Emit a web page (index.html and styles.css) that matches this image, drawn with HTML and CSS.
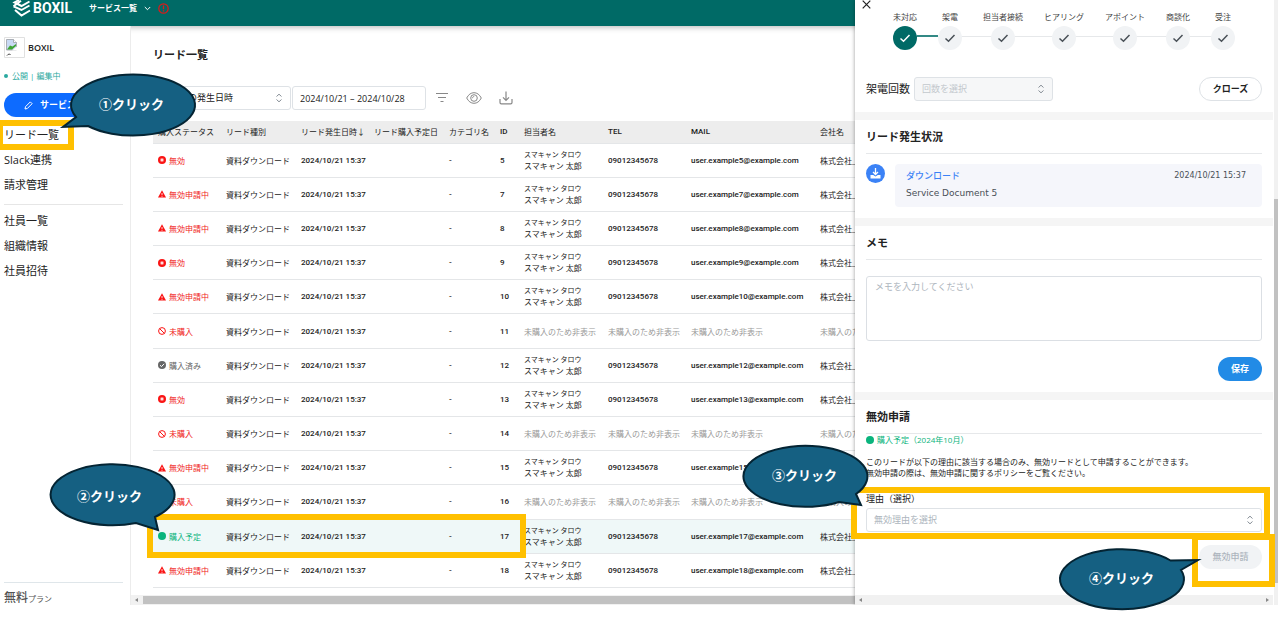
FILE: index.html
```
<!DOCTYPE html>
<html lang="ja">
<head>
<meta charset="utf-8">
<title>リード一覧 | BOXIL</title>
<link rel="stylesheet" href="styles.css">
</head>
<body>
<svg class="sprite" aria-hidden="true">
  <symbol id="updown" viewBox="0 0 8 10"><path d="M1.500 3.500 4 1.200 6.500 3.500M1.500 6.500 4 8.800 6.500 6.500" fill="none" stroke="#868e96" stroke-width="1"/></symbol>
  <symbol id="check" viewBox="0 0 12 12"><path d="M1.500 6.500 4.500 9.200 10.500 3" fill="none" stroke="currentColor" stroke-width="1.500"/></symbol>
  <symbol id="st-ng" viewBox="0 0 8 8"><circle cx="4" cy="4" r="4" fill="#fa1414"/><path d="M2.600 2.600h2.800v2.800H2.600z" fill="#fff"/><path d="M3.500 3.500h1v1h-1z" fill="#fa8080"/></symbol>
  <symbol id="st-warn" viewBox="0 0 8 8"><path d="M4 .3 8 7.600H0z" fill="#fa1414"/><path d="M4 3v2.200M4 5.900v.9" stroke="#fff" stroke-width=".8"/></symbol>
  <symbol id="st-ban" viewBox="0 0 8 8"><circle cx="4" cy="4" r="3.400" fill="none" stroke="#fa1414" stroke-width="1"/><path d="m1.700 1.700 4.600 4.600" stroke="#fa1414"/></symbol>
  <symbol id="st-done" viewBox="0 0 8 8"><circle cx="4" cy="4" r="4" fill="#666"/><path d="m2 4.200 1.500 1.400L6.100 2.800" fill="none" stroke="#fff"/></symbol>
  <symbol id="st-plan" viewBox="0 0 8 8"><circle cx="4" cy="4" r="4" fill="#0ab47d"/></symbol>
</svg>

<div class="app">
  <header class="topbar">
    <a class="brand" href="#">
      <svg width="19" height="17" viewBox="0 0 19 17" fill="none" stroke="#fff" stroke-width="2"><path d="M17.500 1.500 9.500 6 2.500 2.500 7 0M17.500 5.500 9.500 10 1.500 6.300M3 10l6.500 5.500 8.500-5M1.500 6.300 9 .8"/></svg>
      <span>BOXIL</span>
    </a>
    <button class="services">サービス一覧
      <svg width="7" height="5" viewBox="0 0 7 5"><path d="M.8 1l2.700 2.700L6.200 1" fill="none" stroke="#fff"/></svg>
      <svg width="11" height="11" viewBox="0 0 11 11"><circle cx="5.500" cy="5.500" r="4.700" fill="none" stroke="#e01818" stroke-width="1.200"/><path d="M5.500 2.500v3.700M5.500 7.200v1.300" stroke="#e01818" stroke-width="1.300"/></svg>
    </button>
  </header>

  <aside class="sidebar">
    <div class="company">
      <svg width="21" height="21" viewBox="0 0 21 21"><path d="M.5.5h20v20H.5z" fill="#fff" stroke="#e0e0e0"/><path d="M2.500 2.500h7l3 3v7.500h-10z" fill="#c9daf5" stroke="#9aa0a6" stroke-width=".8"/><path d="M9.500 2.500v3h3" fill="#fff" stroke="#9aa0a6" stroke-width=".8"/><path d="m3 12.500 3-4 2.500 1L12 7v2l-4 3.500z" fill="#3fa535"/><path d="M8 13.500l5-4v4z" fill="#fff"/><path d="M3 18.500c1-1.500 2.500-1.500 3.500-1" fill="none" stroke="#333"/></svg>
      <strong>BOXIL</strong>
    </div>
    <p class="publish"><i></i>公開 | 編集中</p>
    <button class="edit"><svg width="9" height="9" viewBox="0 0 9 9"><path d="M1 8l.5-2.300L6.300.9l1.800 1.800-4.800 4.800z" fill="none" stroke="#fff"/></svg>サービスを編集</button>
    <nav>
      <a href="#">リード一覧</a>
      <a href="#">Slack連携</a>
      <a href="#">請求管理</a>
    </nav>
    <nav class="second">
      <a href="#">社員一覧</a>
      <a href="#">組織情報</a>
      <a href="#">社員招待</a>
    </nav>
    <p class="plan"><strong>無料</strong>プラン</p>
  </aside>

  <main class="main">
    <div class="content">
      <h1>リード一覧</h1>
      <div class="filters">
        <div class="select period">
          <select aria-label="日時の種類"><option>リードの発生日時</option></select>
          <svg width="8" height="10"><use href="#updown"/></svg>
        </div>
        <input class="range" aria-label="期間" value="2024/10/21 – 2024/10/28">
        <button aria-label="絞り込み"><svg width="14" height="14" viewBox="0 0 14 14"><path d="M1 2.500h12M3 6.500h8M5.500 10.500h3" fill="none" stroke="#888" stroke-width="1.200"/></svg></button>
        <button aria-label="表示項目"><svg width="16" height="14" viewBox="0 0 16 14" fill="none" stroke="#888"><path d="M.7 7C2.500 3.500 5 1.700 8 1.700S13.500 3.500 15.300 7C13.500 10.500 11 12.300 8 12.300S2.500 10.500.7 7z"/><circle cx="8" cy="7" r="3.300"/><path d="M6.500 7.200C6.500 6 7.200 5.500 8.200 5.500"/></svg></button>
        <button aria-label="ダウンロード"><svg width="14" height="14" viewBox="0 0 14 14" fill="none" stroke="#888" stroke-width="1.200"><path d="M7 .5v8.500M4 6.300l3 3 3-3M1 8v3.500c0 .8.500 1.300 1.300 1.300h9.400c.8 0 1.300-.5 1.300-1.300V8"/></svg></button>
      </div>
      <div class="table-wrap">
        <table>
          <colgroup><col class="c-status"><col class="c-type"><col class="c-date"><col class="c-plan"><col class="c-cat"><col class="c-id"><col class="c-name"><col class="c-tel"><col class="c-mail"><col></colgroup>
          <thead><tr><th>購入ステータス</th><th>リード種別</th><th>リード発生日時↓</th><th>リード購入予定日</th><th>カテゴリ名</th><th class="latin">ID</th><th>担当者名</th><th class="latin">TEL</th><th class="latin">MAIL</th><th>会社名</th></tr></thead>
          <tbody id="rows"></tbody>
        </table>
      </div>
    </div>
    <div class="hscroll"><i class="arrow left"></i><span></span></div>
  </main>

  <section class="drawer" aria-label="リード詳細">
    <div class="panel">
      <section class="progress">
        <div class="stage">
          <button class="close" aria-label="閉じる"><svg width="9" height="9" viewBox="0 0 9 9"><path d="M.7.7l7.600 7.600M8.300.7.7 8.300" stroke="#222" stroke-width="1.200"/></svg></button>
          <ol>
            <li class="on">未対応<i><svg width="12" height="12"><use href="#check"/></svg></i></li>
            <li>架電<i><svg width="12" height="12"><use href="#check"/></svg></i></li>
            <li>担当者接続<i><svg width="12" height="12"><use href="#check"/></svg></i></li>
            <li>ヒアリング<i><svg width="12" height="12"><use href="#check"/></svg></i></li>
            <li>アポイント<i><svg width="12" height="12"><use href="#check"/></svg></i></li>
            <li>商談化<i><svg width="12" height="12"><use href="#check"/></svg></i></li>
            <li>受注<i><svg width="12" height="12"><use href="#check"/></svg></i></li>
          </ol>
        </div>
        <div class="calls">
          <label for="calls">架電回数</label>
          <div class="select off"><select id="calls" disabled><option>回数を選択</option></select><svg width="8" height="10"><use href="#updown"/></svg></div>
          <button class="pill outline">クローズ</button>
        </div>
      </section>
      <section>
        <h2>リード発生状況</h2>
        <div class="event">
          <svg width="19" height="19" viewBox="0 0 19 19"><circle cx="9.500" cy="9.500" r="9.500" fill="#3b82f6"/><path d="M9.500 4v6.200M7 8l2.500 2.500L12 8" fill="none" stroke="#fff" stroke-width="1.300"/><path d="M4.500 11h2.700l2.300 1.600 2.300-1.600h2.700v3.500h-10z" fill="#fff"/></svg>
          <div class="card"><div><a href="#">ダウンロード</a><p>Service Document 5</p></div><time>2024/10/21 15:37</time></div>
        </div>
      </section>
      <section>
        <h2>メモ</h2>
        <textarea aria-label="メモ" placeholder="メモを入力してください"></textarea>
        <button class="pill save">保存</button>
      </section>
      <section>
        <h2>無効申請</h2>
        <p class="due"><svg width="8" height="8"><use href="#st-plan"/></svg>購入予定（2024年10月）</p>
        <p class="note">このリードが以下の理由に該当する場合のみ、無効リードとして申請することができます。<br>無効申請の際は、無効申請に関するポリシーをご覧ください。</p>
        <label class="reason" for="reason">理由（選択）</label>
        <div class="select hint"><select id="reason"><option>無効理由を選択</option></select><svg width="8" height="10"><use href="#updown"/></svg></div>
        <button class="pill apply" disabled>無効申請</button>
      </section>
      <div class="hscroll track"><i class="arrow left"></i><i class="arrow right"></i></div>
    </div>
    <div class="vscroll"><span></span></div>
  </section>
</div>

<div class="mark m1"></div>
<div class="mark m2"></div>
<div class="mark m3"></div>
<div class="mark m4"></div>

<div class="bubble b1"><svg width="140" height="70" viewBox="0 0 140 70"><path d="M17 48 A62 30.500 0 1 1 29 57 L4 58 Z"/></svg><span>①クリック</span></div>
<div class="bubble b2"><svg width="140" height="70" viewBox="0 0 140 70"><path d="M94 60 A62 30.500 0 1 1 113 54 L116 67 Z"/></svg><span>②クリック</span></div>
<div class="bubble b3"><svg width="140" height="70" viewBox="0 0 140 70"><path d="M102 60 A62 30.500 0 1 1 119 52 L124 63 Z"/></svg><span>③クリック</span></div>
<div class="bubble b4"><svg width="150" height="70" viewBox="0 0 150 70"><path d="M116.500 16.500 A62 30 0 1 0 127 26 L144 16 Z"/></svg><span>④クリック</span></div>
<script src="rows.js"></script>
</body>
</html>
```
FILE: rows.js
```
const kinds = {
  ng: ['無効', 'red'],
  warn: ['無効申請中', 'red'],
  ban: ['未購入', 'red'],
  done: ['購入済み', 'gray'],
  plan: ['購入予定', 'green']
};
const leads = [[5, 'ng'], [7, 'warn'], [8, 'warn'], [9, 'ng'], [10, 'warn'], [11, 'ban'], [12, 'done'],
  [13, 'ng'], [14, 'ban'], [15, 'warn'], [16, 'ban'], [17, 'plan'], [18, 'warn']];
const masked = '<td class="masked">未購入のため非表示</td>';

document.getElementById('rows').innerHTML = leads.map(([id, kind]) => {
  const [text, tone] = kinds[kind];
  const contact = kind === 'ban'
    ? masked.repeat(4)
    : `<td><small>スマキャン タロウ</small>スマキャン 太郎</td><td class="latin">09012345678</td><td class="latin">user.example${id}@example.com</td><td>株式会社_</td>`;
  return `<tr class="${kind === 'plan' ? 'selected' : ''}">
    <td><span class="status ${tone}"><svg width="8" height="8"><use href="#st-${kind}"/></svg>${text}</span></td>
    <td>資料ダウンロード</td><td class="latin">2024/10/21 15:37</td><td></td><td class="latin">-</td><td class="latin">${id}</td>${contact}</tr>`;
}).join('');
```
FILE: styles.css
```
* { box-sizing: border-box; }
body, h1, h2, p, ol { margin: 0; padding: 0; }
body {
  background: #fff;
  color: #222;
  font: 9px/12px "Open Sans", "Noto Sans CJK JP", sans-serif;
  overflow: hidden;
}
button, input, select, textarea { font: inherit; color: inherit; }
button { border: 0; padding: 0; background: none; cursor: pointer; }
a { color: inherit; text-decoration: none; }
svg { display: block; flex: none; }
.sprite { display: none; }

.app {
  position: relative;
  display: grid;
  grid-template: 26px minmax(0, 1fr) / 131px minmax(0, 1fr);
  height: calc(100vh - 14px);
  overflow: hidden;
}

.topbar {
  grid-column: 1 / -1;
  display: flex;
  align-items: flex-start;
  gap: 17px;
  padding-left: 12px;
  background: #006a66;
  color: #fff;
  box-shadow: 0 1px 6px rgba(0, 0, 0, .3);
  z-index: 1;
}
.brand { display: flex; gap: 2px; }
.brand span { font: bold 14px/17px Roboto, "Liberation Sans", sans-serif; }
.services { display: flex; align-items: center; gap: 7px; height: 16px; font-size: 8px; font-weight: 700; }

.sidebar {
  display: flex;
  flex-direction: column;
  padding: 11px 7px 0 4px;
  border-right: 1px solid #ececec;
  background: #fff;
  z-index: 1;
}
.company { display: flex; align-items: center; gap: 3px; font-size: 9px; }
.company strong { font-weight: 600; }
.publish { display: flex; align-items: center; gap: 4px; margin-top: 12px; color: #2aa9a0; font-size: 8px; }
.publish i { width: 4px; height: 4px; border-radius: 50%; background: #2aa9a0; }
.edit {
  display: flex;
  align-items: center;
  justify-content: center;
  gap: 7px;
  height: 24px;
  margin-top: 11px;
  border-radius: 12px;
  background: #0d6bff;
  color: #fff;
  font-weight: 700;
}
.sidebar nav { display: grid; gap: 9px; padding-top: 10px; font-size: 11px; line-height: 16px; }
.sidebar .second { margin-top: 11px; padding-top: 8px; border-top: 1px solid #e6e6e6; }
.plan { margin-top: auto; padding: 8px 0 0; height: 23px; border-top: 1px solid #dfe6ea; color: #555; font-size: 8px; line-height: 14px; }
.plan strong { font-size: 12px; font-weight: 500; }

.main { display: flex; flex-direction: column; min-width: 0; }
.content { flex: 1; display: flex; flex-direction: column; min-height: 0; padding: 21px 0 7px 22px; }
h1 { font-size: 11px; line-height: 16px; }
.filters { display: flex; align-items: center; margin: 23px 0 11px; }
.filters button { margin-left: 17px; }
.filters .range + button { margin-left: 9px; }
.select { display: grid; align-items: center; }
.select > * { grid-area: 1 / 1; }
.select svg { justify-self: end; margin-right: 8px; pointer-events: none; }
.select select, .range {
  appearance: none;
  width: 100%;
  height: 24px;
  padding: 0 7px;
  border: 1px solid #dee2e6;
  border-radius: 3px;
  background: #fff;
}
.period { width: 138px; }
.filters .range { width: 134px; margin-left: 1px; }

.table-wrap { flex: 1; min-height: 0; overflow: hidden; }
table { width: 100%; height: 100%; table-layout: fixed; border-collapse: collapse; font-size: 8px; line-height: 11px; }
th, td { padding: 0 0 0 5px; text-align: left; font-weight: 400; white-space: nowrap; border-bottom: 1px solid #e4e6e8; }
th { height: 22px; background: #ededed; }
td { height: 34px; }
.c-status { width: 68px; }
.c-type { width: 75px; }
.c-date { width: 73px; }
.c-plan { width: 75px; }
.c-cat { width: 51px; }
.c-id { width: 24px; }
.c-name { width: 84px; }
.c-tel { width: 83px; }
.c-mail { width: 129px; }
.latin { font-family: Roboto, "Open Sans", sans-serif; font-weight: 500; }
td small { display: block; font-size: 7px; line-height: 10px; }
.masked { color: #999; }
.status { display: flex; align-items: center; gap: 3px; }
.red { color: #f01c1c; }
.gray { color: #666; }
.green { color: #0ab47d; }
.selected { background: #eff8f8; }

.hscroll { display: flex; align-items: center; height: 10px; padding: 0 4px; background: #f1f1f1; }
.hscroll span { flex: 1; height: 8px; margin-left: 5px; background: #c1c1c1; }
.arrow { border: 2px solid transparent; }
.arrow.left { border-right: 3px solid #888; border-left: 0; }
.arrow.right { border-left: 3px solid #888; border-right: 0; }
.track { justify-content: space-between; margin-top: auto; }

.drawer {
  position: absolute;
  inset: 0 0 0 auto;
  z-index: 2;
  display: grid;
  grid-template-columns: 1fr 4px;
  gap: 1px;
  width: 423px;
  background: #fff;
  box-shadow: 0 0 4px rgba(0, 0, 0, .4);
}
.panel { display: flex; flex-direction: column; }
.panel > section { display: flex; flex-direction: column; padding: 0 11px 11px; border-top: 8px solid #f5f5f5; }
.panel > .progress { border-top: 0; }
.stage { display: flex; align-items: flex-start; gap: 22px; margin-left: -4px; }
.stage ol { position: relative; display: flex; gap: 21px; padding-top: 11px; list-style: none; font-size: 8px; color: #444; }
.stage ol::before { content: ""; position: absolute; left: 12px; right: 12px; top: 36px; height: 1px; background: #e6e8ea; }
.stage li { position: relative; display: grid; justify-items: center; gap: 3px; }
.stage li i { display: grid; place-items: center; width: 24px; height: 24px; border-radius: 50%; background: #f1f3f5; color: #495057; }
.stage .on i { background: #006a66; color: #fff; }
.stage .on::after { content: ""; position: absolute; left: 100%; bottom: 13px; width: 21px; height: 2px; background: #338985; }
.calls { display: flex; align-items: center; gap: 4px; margin-top: 27px; }
.calls label { font-size: 11px; }
.calls .select { width: 139px; }
.off select { background: #f6f7f8; color: #c3c8cd; opacity: 1; }
.pill { height: 24px; border-radius: 12px; font-weight: 700; align-self: flex-end; }
.outline { width: 63px; margin-left: auto; border: 1px solid #dee2e6; }
h2 { padding: 10px 0 9px; border-bottom: 1px solid #e6e8ea; font-size: 11px; line-height: 14px; }
.event { display: flex; align-items: flex-start; gap: 10px; margin-top: 10px; }
.card { flex: 1; display: flex; justify-content: space-between; padding: 6px 16px 8px 11px; border-radius: 4px; background: #f5f6fb; color: #495057; font-family: "DejaVu Sans", "Noto Sans CJK JP", sans-serif; }
.card a { color: #3b82f6; font-weight: 500; }
.card p { margin-top: 5px; }
.card time { font-size: 8px; }
textarea { height: 65px; margin-top: 16px; padding: 4px 8px; border: 1px solid #dbdfe4; border-radius: 3px; resize: none; }
textarea::placeholder { color: #adb5bd; }
.save { width: 44px; margin-top: 16px; background: #228be6; color: #fff; }
.due { display: flex; align-items: center; gap: 3px; color: #0ab47d; font-size: 8px; }
.note { margin-top: 10px; font-size: 8px; line-height: 11px; }
.reason { margin: 15px 0 3px; }
.hint select { color: #adb5bd; }
.apply { width: 63px; margin-top: 13px; background: #f1f3f5; color: #adb5bd; font-weight: 500; }
.vscroll { padding: 199px 0 22px; background: #f1f1f1; display: grid; }
.vscroll span { background: #c1c1c1; }

.mark { position: absolute; z-index: 3; border: 6px solid #ffc000; }
.m1 { left: -3px; top: 120px; width: 77px; height: 30px; }
.m2 { left: 147px; top: 514px; width: 379px; height: 44px; }
.m3 { right: 8px; top: 487px; width: 419px; height: 52px; }
.m4 { right: 3px; top: 534px; width: 83px; height: 53px; }

.bubble { position: absolute; z-index: 4; color: #fff; font-size: 13px; line-height: 18px; font-weight: 700; }
.bubble path { fill: #156082; stroke: #042433; stroke-width: 2; }
.bubble span { position: absolute; left: 40px; top: 26px; white-space: nowrap; }
.b1 { left: 59px; top: 69px; }
.b2 { left: 42px; top: 463px; }
.b2 span, .b3 span { left: 35px; top: 24px; }
.b3 { left: 737px; top: 442px; }
.b4 { right: 74px; top: 544px; }
.b4 span { left: 35px; top: 25px; }
```
